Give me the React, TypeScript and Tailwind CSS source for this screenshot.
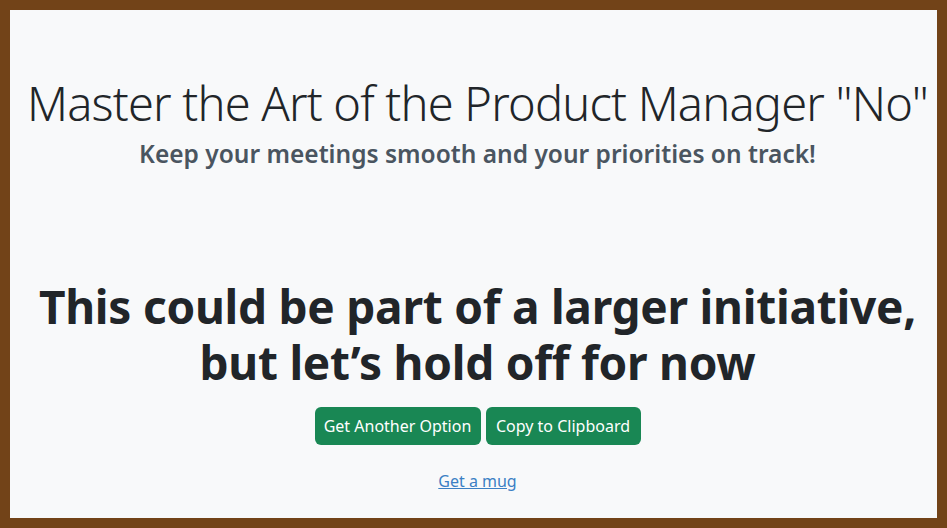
export default function App() {
  return (
    <div className="min-h-[528px] bg-[#724318] p-[10px]">
      <main
        className="flex min-h-[508px] flex-col items-center bg-[#f8f9fa] pl-[12px] pr-[4px] pt-[64px] text-center text-[#212529]"
        style={{ fontFamily: '"Segoe UI", "Noto Sans", "Open Sans", sans-serif' }}
      >
        <h1 className="whitespace-nowrap text-[47px] font-light leading-[1.25] tracking-[-0.8px]">
          Master the Art of the Product Manager "No"
        </h1>
        <h4 className="mt-[6px] text-[24.5px] font-semibold leading-[1.2] text-[#4a5560]">
          Keep your meetings smooth and your priorities on track!
        </h4>

        <h2 className="mt-[110px] text-[46px] font-bold leading-[1.22] tracking-[-0.25px]">
          This could be part of a larger initiative,
          <br />
          but let’s hold off for now
        </h2>

        <div className="mt-[17px] flex gap-[5px]">
          <button className="h-[38px] w-[166px] rounded-md bg-[#198754] text-base text-white">
            Get Another Option
          </button>
          <button className="h-[38px] w-[155px] rounded-md bg-[#198754] text-base text-white">
            Copy to Clipboard
          </button>
        </div>

        <a href="#" className="mt-[24px] text-base leading-6 text-[#3b7fc4] underline">
          Get a mug
        </a>
      </main>
    </div>
  );
}
